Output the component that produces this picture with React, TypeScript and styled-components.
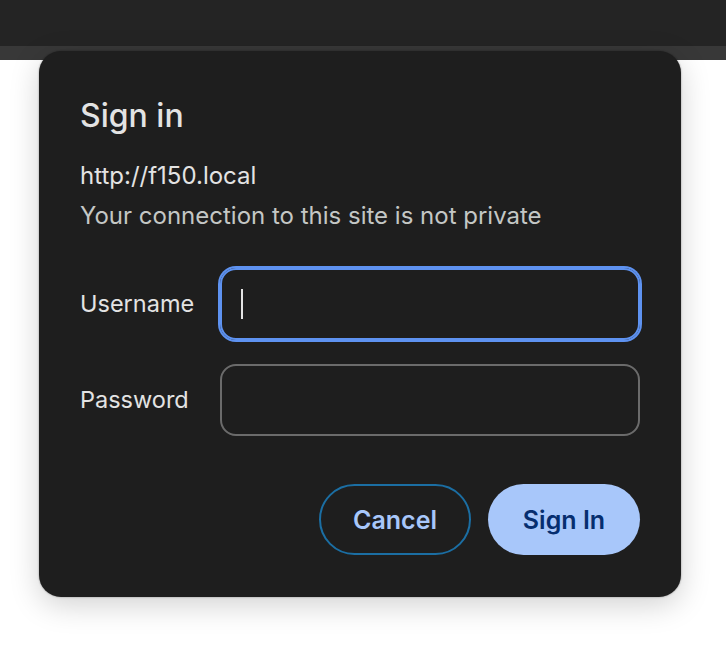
import { createGlobalStyle } from "styled-components";
import styled from "styled-components";

const GlobalStyle = createGlobalStyle`
  html, body {
    margin: 0;
    padding: 0;
    background: #ffffff;
  }
  body {
    font-family: Inter, "Noto Sans", "Liberation Sans", sans-serif;
  }
`;

function App() {
  return (
    <Page>
      <GlobalStyle />
      <TopBar />
      <Strip />
      <Dialog>
        <Title>Sign in</Title>
        <Origin>http://f150.local</Origin>
        <Warning>Your connection to this site is not private</Warning>

        <Form>
          <Label htmlFor="user">Username</Label>
          <Field $focused>
            <Caret />
          </Field>
          <Label htmlFor="pass">Password</Label>
          <Field />
        </Form>

        <Actions>
          <Button $variant="outline">Cancel</Button>
          <Button $variant="filled">Sign In</Button>
        </Actions>
      </Dialog>
    </Page>
  );
}

export default App;

const Page = styled.div`
  position: relative;
  width: 726px;
  height: 666px;
  background: #ffffff;
  overflow: hidden;
`;

const TopBar = styled.div`
  height: 46px;
  background: #242424;
`;

const Strip = styled.div`
  height: 14px;
  background: #383838;
`;

// the dialog floats over the browser chrome, so it is placed on top
const Dialog = styled.div`
  position: absolute;
  left: 39px;
  top: 51px;
  width: 642px;
  height: 546px;
  box-sizing: border-box;
  padding: 46px 41px 42px 41px;
  background: #1e1e1e;
  border-radius: 22px;
  box-shadow: 0 8px 30px rgba(0, 0, 0, 0.18), 0 0 2px rgba(0, 0, 0, 0.4);
  display: flex;
  flex-direction: column;
`;

const Title = styled.h1`
  margin: 0;
  font-size: 32px;
  font-weight: 500;
  color: #e3e3e3;
  line-height: 38px;
`;

const Origin = styled.div`
  margin-top: 26px;
  font-size: 24px;
  line-height: 30px;
  color: #e3e3e3;
`;

const Warning = styled.div`
  margin-top: 10px;
  font-size: 24px;
  line-height: 30px;
  color: #c4c7c5;
`;

const Form = styled.div`
  margin-top: 37px;
  display: grid;
  grid-template-columns: 140px 420px;
  row-gap: 24px;
  align-items: center;
`;

const Label = styled.label`
  font-size: 23.5px;
  color: #e3e3e3;
  margin-top: -2px;
`;

const Field = styled.div<{ $focused?: boolean }>`
  height: 72px;
  box-sizing: border-box;
  border-radius: 16px;
  border: 2px solid ${(p) => (p.$focused ? "#5e92f0" : "#6b6b6b")};
  box-shadow: ${(p) => (p.$focused ? "0 0 0 2px #5e92f0" : "none")};
  display: flex;
  align-items: center;
  padding-left: 19px;
`;

const Caret = styled.span`
  width: 2px;
  height: 30px;
  background: #e3e3e3;
`;

const Actions = styled.div`
  margin-top: auto;
  display: flex;
  justify-content: flex-end;
  gap: 17px;
`;

const Button = styled.button<{ $variant: "outline" | "filled" }>`
  width: 152px;
  height: 71px;
  box-sizing: border-box;
  border-radius: 36px;
  font-family: Inter, "Noto Sans", sans-serif;
  font-size: 25px;
  font-weight: 600;
  cursor: pointer;
  border: ${(p) => (p.$variant === "outline" ? "2px solid #1b6ea3" : "none")};
  background: ${(p) => (p.$variant === "outline" ? "transparent" : "#a8c7fa")};
  color: ${(p) => (p.$variant === "outline" ? "#a8c7fa" : "#062e6f")};
`;
